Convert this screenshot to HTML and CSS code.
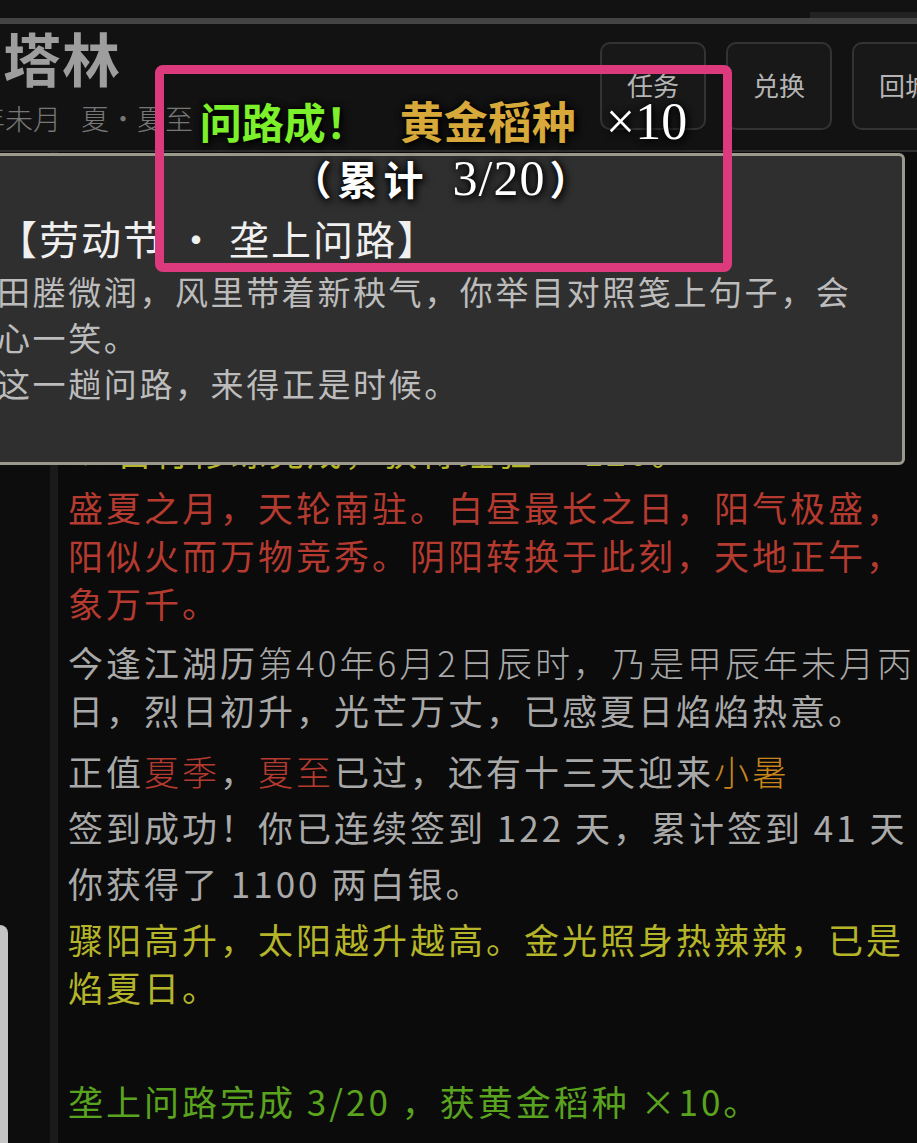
FILE: index.html
```html
<!DOCTYPE html>
<html lang="zh">
<head>
    <meta charset="UTF-8">
    <meta name="viewport" content="width=device-width, initial-scale=1.0">
    <title>塔林</title>
    <link rel="stylesheet" href="styles.css">
</head>
<body>
<div class="topbar"><span class="topbar-tab"></span></div>
<div class="strip"></div>

<header class="header">
    <div class="place">
        <div class="place-name">塔林</div>
        <div class="place-date">年未月<span class="gap"></span>夏·夏至</div>
    </div>
    <nav class="actions">
        <button class="action">任务</button>
        <button class="action">兑换</button>
        <button class="action">回城</button>
    </nav>
</header>

<main class="stage">
    <aside class="side"><div class="side-tab"></div></aside>
    <div class="rule"></div>
    <section class="log">
        <!-- 被公告挡住的旧消息 -->
        <p class="msg grey first">你在塔林四处走动。</p>
        <p class="msg grey">塔影斜长。</p>
        <p class="msg grey">远处传来钟声。</p>
        <p class="msg grey">风过林梢。</p>
        <p class="msg grey">你驻足片刻。</p>
        <p class="msg yellow">※ 自行修练完成，获得经验 ×120。</p>

        <p class="msg red para-red">盛夏之月，天轮南驻。白昼最长之日，阳气极盛，阳似火而万物竞秀。阴阳转换于此刻，天地正午，象万千。</p>
        <p class="msg grey para-date">今逢江湖历<span class="kai">第40年6月2日辰时，乃是甲辰年未月丙</span>日，烈日初升，光芒万丈，已感夏日焰焰热意。</p>
        <p class="msg grey">正值<span class="kai red">夏季</span>，<span class="kai red">夏至</span>已过，还有十三天迎来<span class="kai orange">小暑</span></p>
        <p class="msg grey">签到成功！你已连续签到 122 天，累计签到 41 天</p>
        <p class="msg grey">你获得了 1100 两白银。</p>
        <p class="msg yellow">骤阳高升，太阳越升越高。金光照身热辣辣，已是焰夏日。</p>
        <p class="msg blank"></p>
        <p class="msg green">垄上问路完成 3/20 ，获黄金稻种 ×10。</p>
    </section>
</main>

<div class="notice">
    <div class="notice-title">【劳动节 · 垄上问路】</div>
    <p class="notice-text">田塍微润，风里带着新秧气，你举目对照笺上句子，会心一笑。</p>
    <p class="notice-text">这一趟问路，来得正是时候。</p>
</div>

<div class="toast">
    <div class="toast-line">
        <span class="toast-ok">问路成！</span><span class="toast-item">黄金稻种</span><span class="toast-num">×10</span>
    </div>
    <div class="toast-line toast-sum">（累计 <span class="num">3/20</span>）</div>
</div>
</body>
</html>
```

FILE: styles.css
```css
body {
    margin: 0;
    width: 917px;
    height: 1143px;
    overflow: hidden;
    position: relative;
    background: #0b0b0b;
    font-family: "Noto Sans CJK SC", "Noto Sans", sans-serif;
    color: #aaa;
}

.topbar {
    height: 18px;
    background: #121212;
    display: flex;
    justify-content: flex-end;
    align-items: flex-end;
}

.topbar-tab {
    width: 107px;
    height: 6px;
    background: #222;
}

.strip {
    height: 6px;
    background: #444;
}

.header {
    height: 126px;
    background: #121212;
    border-bottom: 2px solid #2e2e2e;
    display: flex;
    justify-content: space-between;
    overflow: hidden;
}

.place {
    padding: 4px 0 0 3px;
}

.place-name {
    font-size: 58px;
    font-weight: 700;
    line-height: 58px;
    color: #9e9e9e;
    letter-spacing: 1px;
}

.place-date {
    margin: 14px 0 0 -26px;
    font-size: 28px;
    line-height: 36px;
    color: #777;
    font-weight: 300;
}

.gap {
    display: inline-block;
    width: 20px;
}

.actions {
    display: flex;
    gap: 20px;
    margin: 18px -41px 0 0;
}

.action {
    width: 106px;
    height: 88px;
    background: #181818;
    border: 2px solid #333;
    border-radius: 10px;
    color: #b5b5b5;
    font-family: "Noto Sans CJK SC", sans-serif;
    font-size: 26px;
    padding: 0 0 4px;
}

.stage {
    display: flex;
    height: 991px;
}

.side {
    width: 50px;
    background: #0d0d0d;
    display: flex;
    flex-direction: column;
    justify-content: flex-end;
}

.side-tab {
    width: 8px;
    height: 218px;
    background: #c4c4c4;
    border-radius: 0 8px 0 0;
}

.rule {
    width: 8px;
    background: #1a1a1a;
}

.log {
    flex: 1;
    padding: 0 0 0 10px;
    margin-right: -8px;
}

.msg {
    margin: 0 0 8px;
    font-size: 35px;
    line-height: 48px;
    letter-spacing: 3px;
}

.first { margin-top: -5px; }
.para-red { margin-bottom: 11px; }
.para-date { margin-bottom: 13px; }

.blank {
    height: 50px;
}

.grey { color: #a9a9a9; }
.red { color: #b53a2f; }
.yellow { color: #b5b52a; }
.green { color: #5aa31f; }
.orange { color: #c8841c; }

.kai {
    font-weight: 300;
}

/* 节日公告 */
.notice {
    position: absolute;
    left: -12px;
    top: 153px;
    width: 917px;
    height: 312px;
    box-sizing: border-box;
    padding: 52px 20px 0 14px;
    background: #2f2f2f;
    border: 3px solid #9b988c;
    border-radius: 6px;
}

.notice-title {
    font-size: 40px;
    line-height: 60px;
    letter-spacing: 2px;
    color: #f0f0f0;
    margin-left: -8px;
}

.notice-text {
    margin: 0 0 0 -8px;
    font-size: 33px;
    line-height: 46px;
    letter-spacing: 2.6px;
    color: #bcbcbc;
}

/* 获得提示 */
.toast {
    position: absolute;
    left: 155px;
    top: 65px;
    width: 577px;
    height: 207px;
    box-sizing: border-box;
    border: 9px solid #dc3a7c;
    border-radius: 8px;
    padding-top: 17px;
    text-align: center;
    font-weight: 700;
    text-shadow: 0 0 6px #000, 2px 3px 8px #000;
}

.toast-line {
    line-height: 58px;
    white-space: nowrap;
}

.toast-ok {
    color: #7cf02a;
    font-size: 42px;
}

.toast-item {
    color: #d6a93a;
    font-size: 44px;
    margin-left: 32px;
}

.toast-num {
    color: #fff;
    font-family: "Liberation Serif", serif;
    font-size: 52px;
    font-weight: 400;
    margin-left: 30px;
}

.toast-sum {
    margin-top: -12px;
    color: #fff;
    font-size: 40px;
    letter-spacing: 6px;
}

.num {
    font-family: "Liberation Serif", serif;
    font-size: 50px;
    font-weight: 400;
    letter-spacing: 1px;
    margin: 0 4px 0 8px;
}
```
